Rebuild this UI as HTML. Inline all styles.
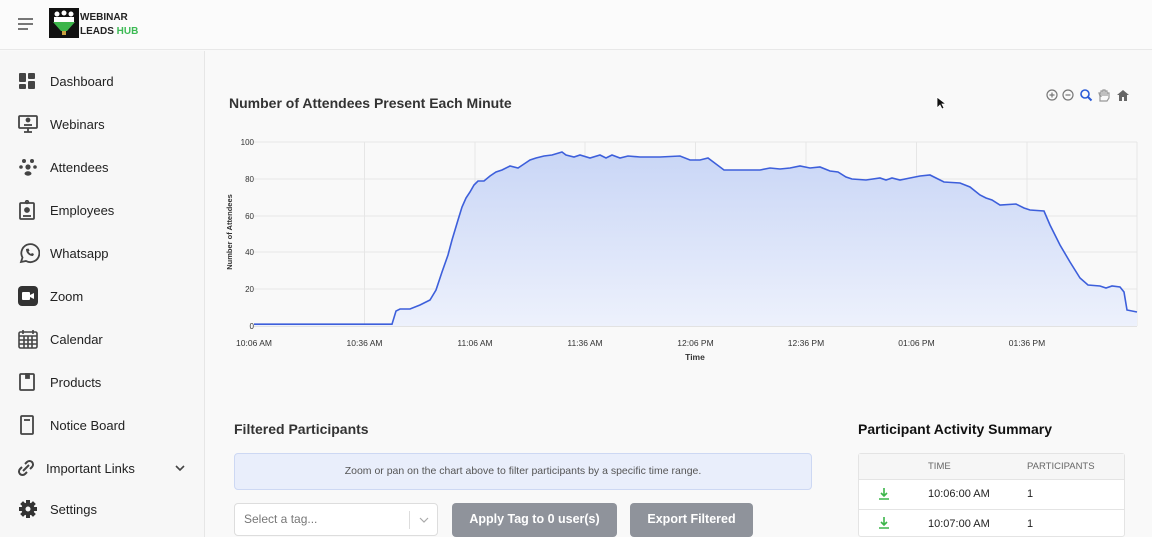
<!DOCTYPE html>
<html><head><meta charset="utf-8"><style>
*{box-sizing:border-box;margin:0;padding:0}
body{width:1152px;height:537px;overflow:hidden;background:#f9f9f9;font-family:"Liberation Sans",sans-serif;color:#222;position:relative}
.hdr{position:absolute;left:0;top:0;width:1152px;height:50px;background:#fbfbfb;border-bottom:1px solid #e8e8e8}
.side{position:absolute;left:0;top:51px;width:205px;height:486px;border-right:1px solid #e6e6e6;background:#f7f7f7}
.mi{position:absolute;left:0;height:24px;display:flex;align-items:center;font-size:13px;color:#222}
.mi svg{position:absolute;left:18px}
.mi span{position:absolute;left:50px;white-space:nowrap}
.abs{position:absolute}
</style></head><body>
<div class="hdr">
 <div class="abs" style="left:18px;top:18px;width:15px;height:2px;background:#777"></div>
 <div class="abs" style="left:18px;top:23px;width:15px;height:2px;background:#777"></div>
 <div class="abs" style="left:18px;top:28px;width:10px;height:2px;background:#777"></div>
 <svg class="abs" style="left:49px;top:8px" width="30" height="30" viewBox="0 0 30 30"><rect width="30" height="30" fill="#111"/><circle cx="8" cy="6" r="2.5" fill="#fff"/><circle cx="15" cy="5" r="2.5" fill="#fff"/><circle cx="22" cy="6" r="2.5" fill="#fff"/><rect x="5" y="9" width="20" height="5" fill="#fff"/><path d="M4 14h22l-8 9h-6z" fill="#3cb54a"/><rect x="13" y="23" width="4" height="4" fill="#c8a040"/></svg>
 <div class="abs" style="left:80px;top:11px;font-size:10px;font-weight:bold;line-height:14px">WEBINAR<br>LEADS <span style="color:#3cba54">HUB</span></div>
</div>
<div class="side">
 <div class="mi" style="top:18px"><svg width="18" height="18" viewBox="0 0 18 18" fill="#444"><rect x="1" y="1" width="7" height="9" rx="1"/><rect x="10" y="1" width="7" height="6" rx="1"/><rect x="1" y="12" width="7" height="5" rx="1"/><rect x="10" y="9" width="7" height="8" rx="1"/></svg><span>Dashboard</span></div>
 <div class="mi" style="top:61px"><svg width="20" height="18" viewBox="0 0 20 18" fill="none" stroke="#444" stroke-width="1.8"><rect x="1" y="1" width="18" height="12" rx="1"/><path d="M6 17h8M10 13v4"/><circle cx="10" cy="5" r="1.5" fill="#444"/><path d="M6 10h8"/></svg><span>Webinars</span></div>
 <div class="mi" style="top:104px"><svg width="20" height="18" viewBox="0 0 20 18" fill="#444"><circle cx="6" cy="3" r="2"/><circle cx="14" cy="3" r="2"/><circle cx="10" cy="9" r="2.6"/><circle cx="3" cy="9" r="1.8"/><circle cx="17" cy="9" r="1.8"/><ellipse cx="10" cy="15.5" rx="3.5" ry="2.2"/></svg><span>Attendees</span></div>
 <div class="mi" style="top:147px"><svg width="18" height="20" viewBox="0 0 18 20" fill="none" stroke="#444" stroke-width="1.8"><rect x="2" y="3" width="14" height="16" rx="1"/><circle cx="9" cy="2" r="1.3"/><circle cx="9" cy="10" r="2" fill="#444"/><path d="M5 16h8" /></svg><span>Employees</span></div>
 <div class="mi" style="top:190px"><svg width="22" height="22" viewBox="0 0 22 22" fill="none" stroke="#444" stroke-width="1.8"><path d="M3 20l1.5-4.5A9 9 0 1 1 8 19z"/><path d="M8 7c0 4 3 7 7 7l1-2-2-1-1 1c-1-.5-2-1.5-2.5-2.5l1-1-1-2z" fill="#444" stroke="none"/></svg><span>Whatsapp</span></div>
 <div class="mi" style="top:233px"><svg width="20" height="20" viewBox="0 0 20 20"><rect x="0" y="0" width="20" height="20" rx="4" fill="#333"/><rect x="4" y="6" width="8" height="8" rx="1" fill="#fff"/><path d="M12 9l4-2v6l-4-2z" fill="#fff"/></svg><span>Zoom</span></div>
 <div class="mi" style="top:276px"><svg width="20" height="20" viewBox="0 0 20 20" fill="none" stroke="#444" stroke-width="1.6"><rect x="1" y="3" width="18" height="16" rx="1.5"/><path d="M1 7h18M5 1v4M15 1v4M1 11h18M1 15h18M6 7v12M10 7v12M14 7v12"/></svg><span>Calendar</span></div>
 <div class="mi" style="top:319px"><svg width="18" height="20" viewBox="0 0 18 20" fill="none" stroke="#444" stroke-width="1.8"><rect x="2" y="2" width="14" height="16" rx="1"/><rect x="8" y="2" width="3" height="4" fill="#444"/></svg><span>Products</span></div>
 <div class="mi" style="top:362px"><svg width="18" height="20" viewBox="0 0 18 20" fill="none" stroke="#444" stroke-width="1.8"><rect x="3" y="1" width="12" height="18" rx="1"/><path d="M6 5h6"/></svg><span>Notice Board</span></div>
 <div class="mi" style="top:405px"><svg style="left:16px" width="20" height="20" viewBox="0 0 20 20" fill="none" stroke="#444" stroke-width="2"><path d="M9 6l2-2a3.5 3.5 0 0 1 5 5l-2 2M11 14l-2 2a3.5 3.5 0 0 1-5-5l2-2M7 13l6-6"/></svg><span style="left:46px">Important Links</span><svg style="left:174px" width="12" height="8" viewBox="0 0 12 8" fill="none" stroke="#444" stroke-width="1.6"><path d="M2 2l4 4 4-4"/></svg></div>
 <div class="mi" style="top:446px"><svg width="20" height="20" viewBox="0 0 20 20"><circle cx="10" cy="10" r="6.5" fill="#333"/><g stroke="#333" stroke-width="4"><path d="M10 1v18M1 10h18M3.6 3.6l12.8 12.8M16.4 3.6L3.6 16.4"/></g><circle cx="10" cy="10" r="2.5" fill="#f7f7f7"/></svg><span>Settings</span></div>
</div>

<div class="abs" style="left:229px;top:95px;font-size:14px;font-weight:bold;color:#333">Number of Attendees Present Each Minute</div>
<svg class="abs" style="left:1045px;top:88px" width="90" height="14" viewBox="0 0 90 14" fill="none" stroke="#777" stroke-width="1.2"><circle cx="7" cy="7" r="5"/><path d="M4.5 7h5M7 4.5v5"/><circle cx="23" cy="7" r="5"/><path d="M20.5 7h5"/><circle cx="40" cy="6" r="4" stroke="#2a5bd7" stroke-width="1.6"/><path d="M43 9l3.5 3.5" stroke="#2a5bd7" stroke-width="2"/><path d="M55 13v-5l-1-3h2v4-6h2v5-6h2v6-5h2v5-3h2v5l-2 3z" stroke="#999"/><path d="M72 7l6-5 6 5h-2v6h-3v-4h-2v4h-3V7z" fill="#666" stroke="none"/></svg>
<svg class="abs" style="left:936px;top:96px" width="10" height="14" viewBox="0 0 10 14"><path d="M1 1v11l3-3 2 4 2-1-2-4h4z" fill="#111" stroke="#fff" stroke-width=".8"/></svg>

<svg class="abs" style="left:210px;top:130px" width="940" height="240" viewBox="210 130 940 240" font-family="Liberation Sans, sans-serif">
<defs><linearGradient id="g" x1="0" y1="0" x2="0" y2="1"><stop offset="0" stop-color="#c9d6f6"/><stop offset="1" stop-color="#edf1fc"/></linearGradient></defs>
<g stroke="#e6e6e6" stroke-width="1">
<path d="M254 142H1137M254 179H1137M254 216H1137M254 252H1137M254 289H1137"/>
<path d="M364.5 142V326M475 142V326M585 142V326M695.5 142V326M806 142V326M916.5 142V326M1027 142V326M1137 142V326"/>
</g>
<path d="M254 326H1137" stroke="#ccc"/>
<g font-size="8" fill="#333" text-anchor="end"><text x="254" y="145">100</text><text x="254" y="182">80</text><text x="254" y="219">60</text><text x="254" y="255">40</text><text x="254" y="292">20</text><text x="254" y="329">0</text></g>
<g font-size="8.5" fill="#333" text-anchor="middle"><text x="254" y="346">10:06 AM</text><text x="364.5" y="346">10:36 AM</text><text x="475" y="346">11:06 AM</text><text x="585" y="346">11:36 AM</text><text x="695.5" y="346">12:06 PM</text><text x="806" y="346">12:36 PM</text><text x="916.5" y="346">01:06 PM</text><text x="1027" y="346">01:36 PM</text></g>
<text x="695" y="360" font-size="8.5" font-weight="bold" text-anchor="middle" fill="#333">Time</text>
<text transform="translate(232 232) rotate(-90)" font-size="7.5" font-weight="bold" text-anchor="middle" fill="#333">Number of Attendees</text>
<path d="M254 326V324.2L392 324.2L396 311L400 309L410 309L420 305L430 300L436 290L442 272L448 255L452 240L458 220L462 207L466 198L470 192L474 185L478 181L484 181L490 176L496 172L502 170L510 166L518 168L524 164L530 160L536 158L544 156L552 155L562 152L566 155L574 157L580 155L590 158L600 155L606 158L612 155L620 158L628 156L640 157L660 157L680 156L690 160L700 160L708 158L716 164L724 170L740 170L760 170L770 168L780 169L790 168L800 166L810 168L820 167L830 171L838 172L846 177L852 179L866 180L880 178L886 180L892 178L900 180L910 178L920 176L930 175L936 178L944 182L960 183L970 187L980 195L986 198L992 200L1000 205L1016 204L1024 208L1030 210L1044 211L1050 225L1060 245L1070 262L1080 278L1088 285L1100 286L1106 288L1112 286L1120 287L1124 292L1127 310L1137 312V326Z" fill="url(#g)" stroke="none"/>
<path d="M254 324.2L392 324.2L396 311L400 309L410 309L420 305L430 300L436 290L442 272L448 255L452 240L458 220L462 207L466 198L470 192L474 185L478 181L484 181L490 176L496 172L502 170L510 166L518 168L524 164L530 160L536 158L544 156L552 155L562 152L566 155L574 157L580 155L590 158L600 155L606 158L612 155L620 158L628 156L640 157L660 157L680 156L690 160L700 160L708 158L716 164L724 170L740 170L760 170L770 168L780 169L790 168L800 166L810 168L820 167L830 171L838 172L846 177L852 179L866 180L880 178L886 180L892 178L900 180L910 178L920 176L930 175L936 178L944 182L960 183L970 187L980 195L986 198L992 200L1000 205L1016 204L1024 208L1030 210L1044 211L1050 225L1060 245L1070 262L1080 278L1088 285L1100 286L1106 288L1112 286L1120 287L1124 292L1127 310L1137 312" fill="none" stroke="#3d5fdb" stroke-width="1.6"/>
</svg>

<div class="abs" style="left:234px;top:421px;font-size:14px;font-weight:bold;color:#333">Filtered Participants</div>
<div class="abs" style="left:234px;top:453px;width:578px;height:37px;background:#e9eefb;border:1px solid #cdd8f3;border-radius:4px;font-size:10.5px;color:#555;text-align:center;line-height:35px">Zoom or pan on the chart above to filter participants by a specific time range.</div>
<div class="abs" style="left:234px;top:503px;width:204px;height:33px;background:#fff;border:1px solid #ddd;border-radius:4px;font-size:12px;color:#777;line-height:31px;padding-left:9px">Select a tag...<div class="abs" style="left:174px;top:7px;width:1px;height:18px;background:#ddd"></div><svg class="abs" style="left:184px;top:12px" width="10" height="8" viewBox="0 0 10 8" fill="none" stroke="#aaa" stroke-width="1.2"><path d="M1 2l4 4 4-4"/></svg></div>
<div class="abs" style="left:452px;top:503px;width:165px;height:34px;background:#8f939b;border-radius:4px;color:#fff;font-size:12.5px;font-weight:bold;text-align:center;line-height:33px">Apply Tag to 0 user(s)</div>
<div class="abs" style="left:630px;top:503px;width:123px;height:34px;background:#8f939b;border-radius:4px;color:#fff;font-size:12.5px;font-weight:bold;text-align:center;line-height:33px">Export Filtered</div>

<div class="abs" style="left:858px;top:421px;font-size:14px;font-weight:bold;color:#111">Participant Activity Summary</div>
<div class="abs" style="left:858px;top:453px;width:267px;height:84px;background:#fff;border:1px solid #e4e4e4;border-radius:3px"></div>
<div class="abs" style="left:859px;top:454px;width:265px;height:26px;background:#f6f6f6;border-bottom:1px solid #e4e4e4"></div>
<div class="abs" style="left:928px;top:461px;font-size:9.5px;color:#666">TIME</div>
<div class="abs" style="left:1027px;top:461px;font-size:9.5px;color:#666">PARTICIPANTS</div>
<div class="abs" style="left:859px;top:509px;width:265px;height:1px;background:#e4e4e4"></div>
<svg class="abs" style="left:878px;top:487px" width="12" height="14" viewBox="0 0 12 14" fill="none" stroke="#3cb54a" stroke-width="1.6"><path d="M6 1v8M3 6l3 3 3-3M1 12h10"/></svg>
<svg class="abs" style="left:878px;top:516px" width="12" height="14" viewBox="0 0 12 14" fill="none" stroke="#3cb54a" stroke-width="1.6"><path d="M6 1v8M3 6l3 3 3-3M1 12h10"/></svg>
<div class="abs" style="left:928px;top:488px;font-size:11px;color:#222">10:06:00 AM</div>
<div class="abs" style="left:1027px;top:488px;font-size:11px;color:#222">1</div>
<div class="abs" style="left:928px;top:518px;font-size:11px;color:#222">10:07:00 AM</div>
<div class="abs" style="left:1027px;top:518px;font-size:11px;color:#222">1</div>
</body></html>
